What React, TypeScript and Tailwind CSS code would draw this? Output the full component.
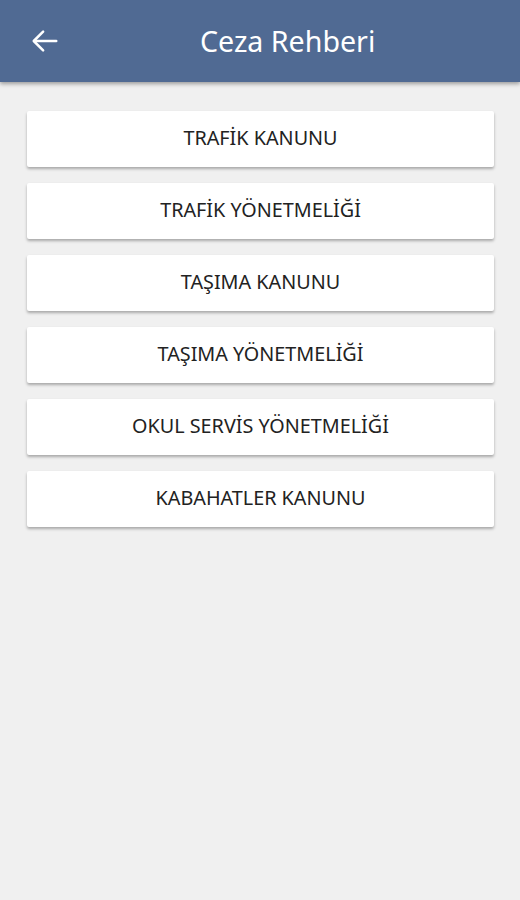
import React from "react";

const items = [
  "TRAFİK KANUNU",
  "TRAFİK YÖNETMELİĞİ",
  "TAŞIMA KANUNU",
  "TAŞIMA YÖNETMELİĞİ",
  "OKUL SERVİS YÖNETMELİĞİ",
  "KABAHATLER KANUNU",
];

export default function App() {
  return (
    <div className="min-h-[900px] w-[520px] bg-[#f0f0f0]" style={{ fontFamily: '"Noto Sans", "Open Sans", sans-serif' }}>
      <div className="relative z-10 flex h-[82px] items-center bg-[#506a93] shadow-[0_2px_4px_rgba(0,0,0,0.35)]">
        <div className="flex w-[90px] items-center pl-[30px]">
          <svg width="30" height="30" viewBox="0 0 24 24" fill="none" stroke="white" strokeWidth="2" strokeLinecap="round" strokeLinejoin="round">
            <path d="M21 12H3.5" />
            <path d="M10.5 4.5L3 12l7.5 7.5" />
          </svg>
        </div>
        <div className="flex-1 pl-[110px] pt-[1px] text-left text-[28.6px] text-white">
          Ceza Rehberi
        </div>
      </div>
      <div className="flex flex-col gap-[16px] px-[27px] pt-[29px]">
        {items.map((t) => (
          <div
            key={t}
            className="flex h-[56px] w-[467px] items-center justify-center rounded-[2px] bg-white pb-[2px] text-[19.8px] text-[#222] shadow-[0_2px_3px_rgba(0,0,0,0.3)]"
          >
            {t}
          </div>
        ))}
      </div>
    </div>
  );
}
